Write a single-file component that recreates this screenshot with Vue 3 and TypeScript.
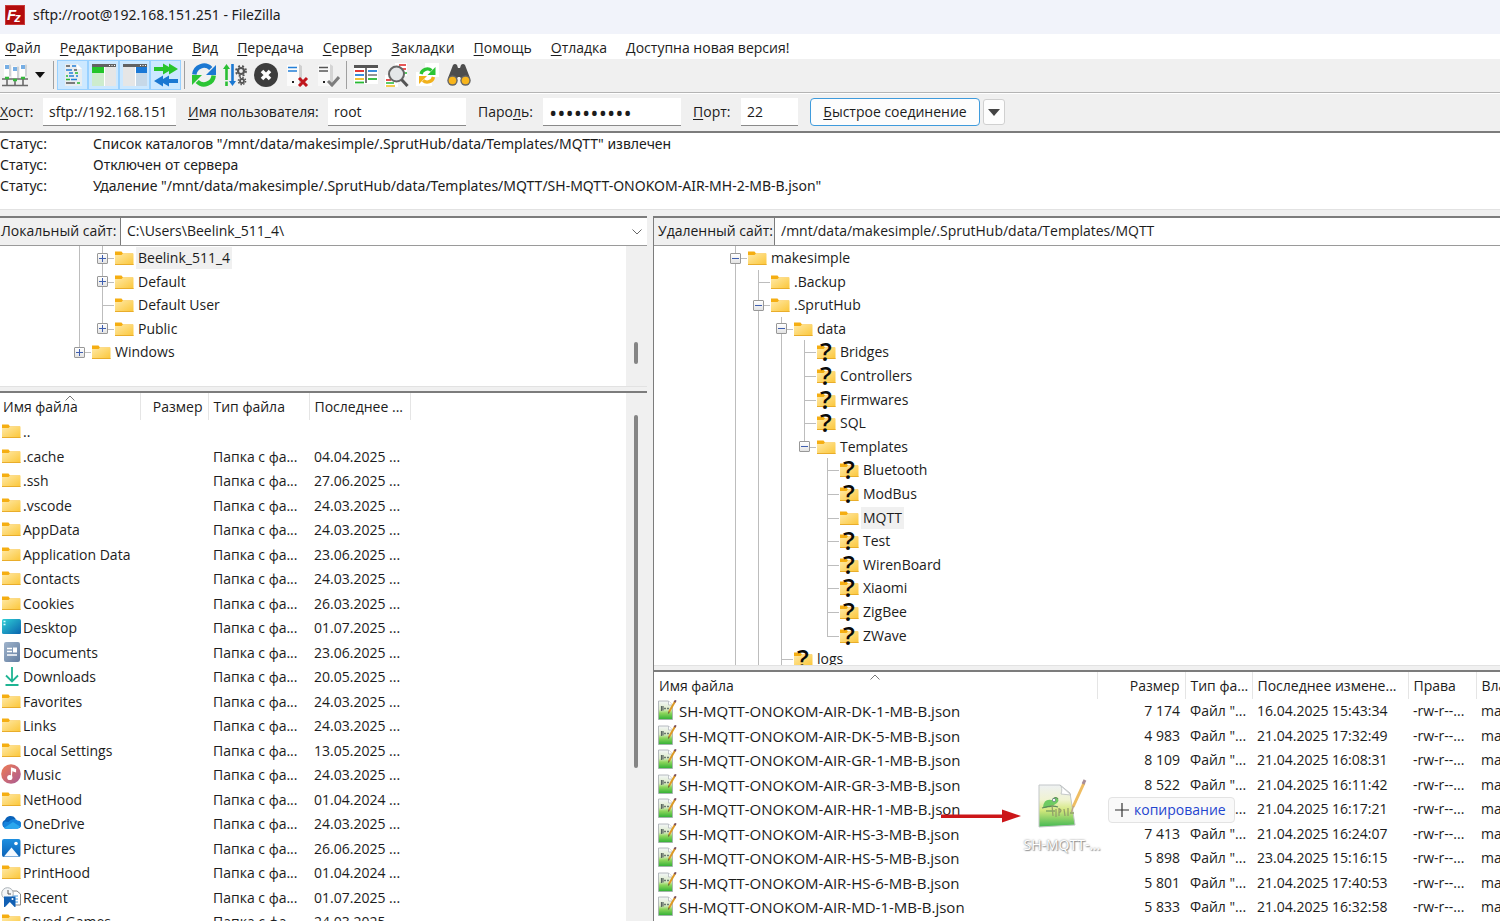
<script setup lang="ts">
import { ref } from 'vue'

type Guide = 'blank' | 'line' | 'tee' | 'elbow' | 'plus' | 'plus-end' | 'minus' | 'minus-top'

interface TreeNode {
  name: string
  icon: 'folder' | 'unknown'
  guides: Guide[]
  selected?: boolean
}

interface LocalFile {
  name: string
  icon: string
  date: string
}

interface RemoteFile {
  name: string
  size: string
  date: string
}

const menu = [
  { key: 'Ф', rest: 'айл' },
  { key: 'Р', rest: 'едактирование' },
  { key: 'В', rest: 'ид' },
  { key: 'П', rest: 'ередача' },
  { key: 'С', rest: 'ервер' },
  { key: 'З', rest: 'акладки' },
  { key: 'П', rest: 'омощь' },
  { key: 'О', rest: 'тладка' },
  { key: 'Д', rest: 'оступна новая версия!' },
]

const toggles = [
  { icon: 'log', label: 'Журнал сообщений' },
  { icon: 'local', label: 'Локальное дерево' },
  { icon: 'remote', label: 'Удаленное дерево' },
  { icon: 'queue', label: 'Очередь передачи' },
]

const actions = [
  { icon: 'refresh', label: 'Обновить' },
  { icon: 'process', label: 'Обработать очередь' },
  { icon: 'cancel', label: 'Отменить' },
  { icon: 'disconnect', label: 'Отключиться' },
  { icon: 'reconnect', label: 'Переподключиться' },
]

const tools = [
  { icon: 'filter', label: 'Фильтры' },
  { icon: 'compare', label: 'Сравнение каталогов' },
  { icon: 'sync', label: 'Синхронный просмотр' },
  { icon: 'find', label: 'Поиск файлов' },
]

const log = [
  'Список каталогов "/mnt/data/makesimple/.SprutHub/data/Templates/MQTT" извлечен',
  'Отключен от сервера',
  'Удаление "/mnt/data/makesimple/.SprutHub/data/Templates/MQTT/SH-MQTT-ONOKOM-AIR-MH-2-MB-B.json"',
]

const localTree: TreeNode[] = [
  { name: 'Beelink_511_4', icon: 'folder', guides: ['line', 'plus'], selected: true },
  { name: 'Default', icon: 'folder', guides: ['line', 'plus'] },
  { name: 'Default User', icon: 'folder', guides: ['line', 'tee'] },
  { name: 'Public', icon: 'folder', guides: ['line', 'plus-end'] },
  { name: 'Windows', icon: 'folder', guides: ['plus-end'] },
]

const remoteTree: TreeNode[] = [
  { name: 'makesimple', icon: 'folder', guides: ['minus'] },
  { name: '.Backup', icon: 'folder', guides: ['line', 'tee'] },
  { name: '.SprutHub', icon: 'folder', guides: ['line', 'minus'] },
  { name: 'data', icon: 'folder', guides: ['line', 'line', 'minus'] },
  ...['Bridges', 'Controllers', 'Firmwares', 'SQL'].map(
    (name): TreeNode => ({ name, icon: 'unknown', guides: ['line', 'line', 'line', 'tee'] }),
  ),
  { name: 'Templates', icon: 'folder', guides: ['line', 'line', 'line', 'minus-top'] },
  ...['Bluetooth', 'ModBus', 'MQTT', 'Test', 'WirenBoard', 'Xiaomi', 'ZigBee', 'ZWave'].map(
    (name): TreeNode => ({
      name,
      icon: name === 'MQTT' ? 'folder' : 'unknown',
      guides: ['line', 'line', 'line', 'blank', name === 'ZWave' ? 'elbow' : 'tee'],
      selected: name === 'MQTT',
    }),
  ),
  { name: 'logs', icon: 'unknown', guides: ['line', 'line', 'tee'] },
]

const localFiles: LocalFile[] = [
  { name: '..', icon: 'folder', date: '' },
  { name: '.cache', icon: 'folder', date: '04.04.2025 ...' },
  { name: '.ssh', icon: 'folder', date: '27.06.2025 ...' },
  { name: '.vscode', icon: 'folder', date: '24.03.2025 ...' },
  { name: 'AppData', icon: 'folder', date: '24.03.2025 ...' },
  { name: 'Application Data', icon: 'folder', date: '23.06.2025 ...' },
  { name: 'Contacts', icon: 'folder', date: '24.03.2025 ...' },
  { name: 'Cookies', icon: 'folder', date: '26.03.2025 ...' },
  { name: 'Desktop', icon: 'desktop', date: '01.07.2025 ...' },
  { name: 'Documents', icon: 'documents', date: '23.06.2025 ...' },
  { name: 'Downloads', icon: 'downloads', date: '20.05.2025 ...' },
  { name: 'Favorites', icon: 'folder', date: '24.03.2025 ...' },
  { name: 'Links', icon: 'folder', date: '24.03.2025 ...' },
  { name: 'Local Settings', icon: 'folder', date: '13.05.2025 ...' },
  { name: 'Music', icon: 'music', date: '24.03.2025 ...' },
  { name: 'NetHood', icon: 'folder', date: '01.04.2024 ...' },
  { name: 'OneDrive', icon: 'cloud', date: '24.03.2025 ...' },
  { name: 'Pictures', icon: 'pictures', date: '26.06.2025 ...' },
  { name: 'PrintHood', icon: 'folder', date: '01.04.2024 ...' },
  { name: 'Recent', icon: 'recent', date: '01.07.2025 ...' },
  { name: 'Saved Games', icon: 'folder', date: '24.03.2025 ...' },
]

const remoteFiles: RemoteFile[] = [
  { name: 'SH-MQTT-ONOKOM-AIR-DK-1-MB-B.json', size: '7 174', date: '16.04.2025 15:43:34' },
  { name: 'SH-MQTT-ONOKOM-AIR-DK-5-MB-B.json', size: '4 983', date: '21.04.2025 17:32:49' },
  { name: 'SH-MQTT-ONOKOM-AIR-GR-1-MB-B.json', size: '8 109', date: '21.04.2025 16:08:31' },
  { name: 'SH-MQTT-ONOKOM-AIR-GR-3-MB-B.json', size: '8 522', date: '21.04.2025 16:11:42' },
  { name: 'SH-MQTT-ONOKOM-AIR-HR-1-MB-B.json', size: '', date: '21.04.2025 16:17:21' },
  { name: 'SH-MQTT-ONOKOM-AIR-HS-3-MB-B.json', size: '7 413', date: '21.04.2025 16:24:07' },
  { name: 'SH-MQTT-ONOKOM-AIR-HS-5-MB-B.json', size: '5 898', date: '23.04.2025 15:16:15' },
  { name: 'SH-MQTT-ONOKOM-AIR-HS-6-MB-B.json', size: '5 801', date: '21.04.2025 17:40:53' },
  { name: 'SH-MQTT-ONOKOM-AIR-MD-1-MB-B.json', size: '5 833', date: '21.04.2025 16:32:58' },
]

const host = ref('sftp://192.168.151')
const user = ref('root')
const password = ref('0123456789')
const port = ref('22')

const hasToggle = (g: Guide) => g.startsWith('plus') || g.startsWith('minus')
</script>

<template>
  <div class="app">
    <svg class="sprite" width="0" height="0" aria-hidden="true">
      <defs>
        <linearGradient id="gFolder" x1="0" y1="0" x2="1" y2="1">
          <stop offset="0" stop-color="#ffe9a6" />
          <stop offset="1" stop-color="#fbc638" />
        </linearGradient>
        <linearGradient id="gDesk" x1="0" y1="0" x2="1" y2="1">
          <stop offset="0" stop-color="#2fd0d6" />
          <stop offset="1" stop-color="#0a63ae" />
        </linearGradient>
        <linearGradient id="gDoc" x1="0" y1="0" x2="1" y2="1">
          <stop offset="0" stop-color="#9fb3cb" />
          <stop offset="1" stop-color="#627da0" />
        </linearGradient>
        <linearGradient id="gMusic" x1="0" y1="0" x2="1" y2="1">
          <stop offset="0" stop-color="#ef7c53" />
          <stop offset="1" stop-color="#a95a95" />
        </linearGradient>
        <linearGradient id="gPic" x1="0" y1="0" x2="0" y2="1">
          <stop offset="0" stop-color="#1f8fe0" />
          <stop offset="1" stop-color="#0b63b8" />
        </linearGradient>
        <linearGradient id="gNote" x1="0" y1="0" x2="0" y2="1">
          <stop offset="0" stop-color="#f3f6f8" />
          <stop offset="0.45" stop-color="#dcebc8" />
          <stop offset="0.65" stop-color="#8ed65c" />
          <stop offset="1" stop-color="#2faf35" />
        </linearGradient>
        <linearGradient id="gGhost" x1="0" y1="0" x2="0" y2="1">
          <stop offset="0" stop-color="#eef1f3" />
          <stop offset="0.35" stop-color="#f0f3d2" />
          <stop offset="0.6" stop-color="#d3e87c" />
          <stop offset="1" stop-color="#43b853" />
        </linearGradient>
      </defs>

      <symbol id="i-folder" viewBox="0 0 20 20">
        <path d="M1 3.500h6.500l1.500 2h10v3H1z" fill="#f5ae12" />
        <path d="M1 7h6.500L9 5.500h10.500V17H1z" fill="url(#gFolder)" />
        <path d="M1 16.500h18.500" stroke="#e9ad2b" />
      </symbol>
      <symbol id="i-unknown" viewBox="0 0 20 20" overflow="visible">
        <use href="#i-folder" />
        <text x="10" y="19" text-anchor="middle" font-family="Open Sans, sans-serif" font-weight="600" font-size="26" fill="#0a0a0a">?</text>
      </symbol>
      <symbol id="i-desktop" viewBox="0 0 20 20">
        <rect x="1" y="2" width="19" height="15" rx="1.500" fill="url(#gDesk)" />
        <path d="M2.500 4.500h2M2.500 7.500h2" stroke="#d6fbff" stroke-width="1.400" />
      </symbol>
      <symbol id="i-documents" viewBox="0 0 20 20">
        <rect x="3" y="0" width="16" height="20" rx="2" fill="url(#gDoc)" />
        <path d="M6 6.500h5M6 9.500h5M6 13h10" stroke="#fff" stroke-width="1.400" />
        <rect x="12" y="5.500" width="4" height="5" fill="#fff" />
      </symbol>
      <symbol id="i-downloads" viewBox="0 0 20 20">
        <path d="M11 1v14M5 9.500l6 6 6-6M4.500 19h13" stroke="#1fb493" stroke-width="1.800" fill="none" />
      </symbol>
      <symbol id="i-music" viewBox="0 0 20 20">
        <circle cx="10" cy="10" r="9.800" fill="url(#gMusic)" />
        <path d="M10.500 13.500V4l4 1.500v2.200l-3-1" fill="#fff" stroke="#fff" stroke-width="1.200" />
        <circle cx="8.800" cy="13.500" r="2.600" fill="#fff" />
      </symbol>
      <symbol id="i-cloud" viewBox="0 0 20 20">
        <path d="M5 15.500a4.500 4.500 0 0 1-1-8.500 6 6 0 0 1 10.500-1.500L11 15.500z" fill="#0a62b9" />
        <path d="M7.500 9a6 6 0 0 1 9-1.500 4 4 0 0 1-.5 8.200H5A4 4 0 0 1 4 8.500z" fill="#1583dc" />
        <path d="M3 15l9-6 7 4.500a3.500 3.500 0 0 1-3 2.200H5a5 5 0 0 1-2-.7z" fill="#2aa7ee" />
      </symbol>
      <symbol id="i-pictures" viewBox="0 0 20 20">
        <rect x="1" y="1" width="18.500" height="18" rx="2" fill="url(#gPic)" />
        <path d="M3 18.500l7.500-9 7.500 9z" fill="#f3f9ff" />
        <circle cx="15" cy="5.500" r="1.800" fill="#fff" />
      </symbol>
      <symbol id="i-recent" viewBox="0 0 20 20">
        <path d="M11 4h5l3.500 3v11h-9z" fill="#fff" stroke="#888" />
        <path d="M12 9h5M12 12h5M12 15h5" stroke="#4a9be0" stroke-width="1.200" />
        <circle cx="6.500" cy="6.500" r="5.800" fill="#f4f6f8" stroke="#a9b0b5" />
        <path d="M7 3v4h3" stroke="#555" fill="none" />
        <path d="M3 9.500h11.500V20H3z" fill="#1160b4" />
        <path d="M4 20l4.800-5 4.800 5z" fill="#fff" />
        <circle cx="11.500" cy="12" r="1" fill="#fff" />
      </symbol>
      <symbol id="i-note" viewBox="0 0 20 20">
        <path d="M1.500 1h10l4 4v14.500h-14z" fill="url(#gNote)" stroke="#a6abb0" stroke-width="0.800" />
        <path d="M11.500 1v4h4" fill="#fff" stroke="#b4b9be" stroke-width="0.800" />
        <path d="M4.500 6v5M6 6v4.500" stroke="#59655f" stroke-width="1.200" />
        <path d="M7 8.500h5" stroke="#6c7a70" stroke-width="1.600" stroke-dasharray="2 1" />
        <path d="M18 1.500L12 12" stroke="#dd9a26" stroke-width="2" />
        <path d="M18.800 0.300l-1.300 2" stroke="#7c5058" stroke-width="2" />
        <path d="M12.200 11.500l-.8 2" stroke="#6b5a3c" stroke-width="1.100" />
      </symbol>

      <symbol id="i-log" viewBox="0 0 24 24">
        <path d="M4 1h12l5 5v17H4z" fill="#e9edf0" />
        <path d="M16 1v5h5z" fill="#fff" />
        <g stroke-width="1.700">
          <path d="M5 3h4M13 7h3M5 20h9" stroke="#555" />
          <path d="M11 3h4M8 13h5M15 13h2" stroke="#2480d8" />
          <path d="M5 7h6M8 10h4M10 16.500h6" stroke="#2480d8" />
          <path d="M14 10h3M5 13h2M5 16.500h4M16 20h3" stroke="#27b834" />
        </g>
      </symbol>
      <symbol id="i-local" viewBox="0 0 24 24">
        <rect x="0" y="1" width="24" height="22" fill="#e6e6e6" />
        <rect x="0" y="1" width="24" height="3" fill="#626262" />
        <path d="M17 2.500h1M19.500 2.500h1M22 2.500h1" stroke="#fff" />
        <rect x="0" y="4" width="12" height="6" fill="#22c52a" />
        <rect x="0" y="10" width="12" height="13" fill="#cdeccd" />
        <path d="M12.500 4v19" stroke="#fff" />
      </symbol>
      <symbol id="i-remote" viewBox="0 0 24 24">
        <rect x="0" y="1" width="24" height="22" fill="#e6e6e6" />
        <rect x="0" y="1" width="24" height="3" fill="#626262" />
        <path d="M17 2.500h1M19.500 2.500h1M22 2.500h1" stroke="#fff" />
        <rect x="13" y="4" width="11" height="6" fill="#1a78d6" />
        <rect x="13" y="10" width="11" height="13" fill="#c6d8e8" />
        <path d="M12.500 4v19" stroke="#fff" />
      </symbol>
      <symbol id="i-queue" viewBox="0 0 24 24">
        <path d="M0 4h9V0.500L15 4V0.500L24 6l-9 5.500V8l-6 3.500V8H0z" fill="#27c52c" />
        <path d="M24 16h-9v-3.500L9 16v-3.500L0 18l9 5.500V20l6 3.500V20h9z" fill="#1b78d2" />
      </symbol>
      <symbol id="i-refresh" viewBox="0 0 24 24">
        <path d="M2.300 11.500a9.700 9.700 0 0 1 16.500-6" fill="none" stroke="#1b78d2" stroke-width="4.500" />
        <path d="M24 2v10H14z" fill="#1b78d2" />
        <path d="M21.700 12.500a9.700 9.700 0 0 1-16.500 6" fill="none" stroke="#2bc534" stroke-width="4.500" />
        <path d="M0 22V12h10z" fill="#2bc534" />
      </symbol>
      <symbol id="i-process" viewBox="0 0 24 24">
        <path d="M3.500 4v19" stroke="#2bbf34" stroke-width="2.600" stroke-dasharray="13 1.500" />
        <path d="M0 6l3.500-5L7 6z" fill="#2bbf34" />
        <path d="M9.500 1v19" stroke="#1b78d2" stroke-width="2.600" />
        <path d="M6 18l3.500 5L13 18z" fill="#1b78d2" />
        <g fill="none" stroke="#555">
          <circle cx="18" cy="8" r="3" stroke-width="2.200" />
          <circle cx="18" cy="8" r="5" stroke-width="1.800" stroke-dasharray="2 2" />
          <circle cx="19" cy="18" r="2" stroke-width="1.800" />
          <circle cx="19" cy="18" r="3.600" stroke-width="1.400" stroke-dasharray="1.500 1.300" />
        </g>
      </symbol>
      <symbol id="i-cancel" viewBox="0 0 24 24">
        <circle cx="12" cy="12" r="12" fill="#3d3d3d" />
        <path d="M8 8l8 8M16 8l-8 8" stroke="#fff" stroke-width="3.600" />
      </symbol>
      <symbol id="i-disconnect" viewBox="0 0 24 24">
        <path d="M2 2l12-1 3 2v20H2z" fill="#fbfbfb" />
        <path d="M14 1l3 2v20h-3z" fill="#d0d0d0" />
        <path d="M3 4.500h9M3 8h9" stroke="#2480d8" stroke-width="1.700" />
        <path d="M7 19h2" stroke="#222" stroke-width="2" />
        <path d="M14 15l8 8M22 15l-8 8" stroke="#c0151c" stroke-width="3" />
      </symbol>
      <symbol id="i-reconnect" viewBox="0 0 24 24">
        <path d="M2 2l12-1 3 2v20H2z" fill="#f8f8f8" />
        <path d="M14 1l3 2v20h-3z" fill="#d4d4d4" />
        <path d="M3 4.500h9M3 8h9" stroke="#555" stroke-width="1.700" />
        <path d="M7 19h2" stroke="#222" stroke-width="2" />
        <path d="M12 18l4 4 7-8" fill="none" stroke="#7d7d7d" stroke-width="3" />
      </symbol>
      <symbol id="i-filter" viewBox="0 0 24 24">
        <path d="M0 2h24v19H0z" fill="#fff" />
        <path d="M0 3.500h24" stroke="#555" stroke-width="3" />
        <path d="M12 3v17" stroke="#555" stroke-width="1.600" />
        <g stroke-width="1.800">
          <path d="M1 8h9" stroke="#e02222" />
          <path d="M14 8h9" stroke="#2480d8" />
          <path d="M1 12h9" stroke="#2480d8" />
          <path d="M14 12h9" stroke="#888" />
          <path d="M1 16h9" stroke="#f0bd22" />
          <path d="M14 16h9" stroke="#27b834" />
          <path d="M1 19.500h9" stroke="#27b834" />
        </g>
      </symbol>
      <symbol id="i-compare" viewBox="0 0 24 24">
        <path d="M10 0h12v13H10zM0 12h13v12H0z" fill="#fff" />
        <path d="M14 2h7M17 6h4" stroke="#e02222" stroke-width="1.600" />
        <path d="M1 17h5" stroke="#e02222" stroke-width="1.600" />
        <path d="M1 20h8M18 10h4" stroke="#27b834" stroke-width="1.600" />
        <path d="M1 23h9" stroke="#f0bd22" stroke-width="1.600" />
        <circle cx="11.500" cy="11" r="7.500" fill="#e3e6e8" fill-opacity="0.950" stroke="#666" stroke-width="2" />
        <path d="M16.500 16.500l6 6.500" stroke="#555" stroke-width="3" />
      </symbol>
      <symbol id="i-sync" viewBox="0 0 24 24">
        <path d="M9 0h14v14H9zM0 9h16v14H0z" fill="#fff" />
        <path d="M5 11a6.500 6.500 0 0 1 10.500-3.500" fill="none" stroke="#2bc534" stroke-width="3.300" />
        <path d="M19.500 4v8h-8z" fill="#2bc534" />
        <path d="M17.500 14a6.500 6.500 0 0 1-10.500 3.500" fill="none" stroke="#f1b11b" stroke-width="3.300" />
        <path d="M3 21v-8h8z" fill="#f1b11b" />
      </symbol>
      <symbol id="i-find" viewBox="0 0 24 24">
        <path d="M6 2q2-2 4 0l1 3h2l1-3q2-2 4 0l5 13-6 4-4-5h-2l-4 5-6-4z" fill="#4d4d4d" />
        <circle cx="5.500" cy="17.500" r="5.200" fill="#666" />
        <circle cx="18.500" cy="17.500" r="5.200" fill="#666" />
        <circle cx="5.500" cy="17.500" r="3.800" fill="#f8b51c" />
        <circle cx="18.500" cy="17.500" r="3.800" fill="#f8b51c" />
      </symbol>
      <symbol id="i-site" viewBox="0 0 26 24">
        <path d="M2 1.500h7v12H2zM10 3.500h7v12h-7zM18 1.500h7v12h-7z" fill="#fff" />
        <path d="M7 1.500h2v12H7zM15 3.500h2v12h-2zM23 1.500h2v12h-2z" fill="#cfd3d6" />
        <path d="M3 3h4M3 5h4M11 5h4M11 7h4M19 3h4M19 5h4" stroke="#4a94dc" stroke-width="1.700" />
        <path d="M0 16h26M0 22.500h26M5 16v6M13 18v4M21 16v6" stroke="#6a6a6a" stroke-width="1.600" fill="none" />
        <path d="M3 15h4M11 17h4M19 15h4" stroke="#35b83c" stroke-width="2.400" />
      </symbol>
    </svg>

    <header class="title">
      <svg class="logo" viewBox="0 0 20 20" aria-hidden="true">
        <rect width="20" height="20" fill="#b30c0c" />
        <rect x="0.500" y="0.500" width="19" height="19" fill="none" stroke="#d66" stroke-dasharray="1 1" />
        <text x="2" y="15" font-family="Liberation Sans, sans-serif" font-size="15" font-weight="700" font-style="italic" fill="#fff">F<tspan dx="-2" dy="2" font-size="13">z</tspan></text>
      </svg>
      <span>sftp://root@192.168.151.251 - FileZilla</span>
    </header>

    <nav class="menu">
      <button v-for="m in menu" :key="m.key + m.rest" type="button"><u>{{ m.key }}</u>{{ m.rest }}</button>
    </nav>

    <div class="toolbar">
      <button type="button" class="site" aria-label="Менеджер сайтов">
        <svg class="ico-site"><use href="#i-site" /></svg>
      </button>
      <button type="button" class="drop" aria-label="Список сайтов">
        <svg viewBox="0 0 10 6" width="10" height="6"><path d="M0 0h10L5 6z" fill="#111" /></svg>
      </button>
      <i class="sep"></i>
      <button v-for="t in toggles" :key="t.icon" type="button" class="tool on" :aria-label="t.label" aria-pressed="true">
        <svg class="ico"><use :href="'#i-' + t.icon" /></svg>
      </button>
      <i class="sep"></i>
      <button v-for="t in actions" :key="t.icon" type="button" class="tool" :aria-label="t.label">
        <svg class="ico"><use :href="'#i-' + t.icon" /></svg>
      </button>
      <i class="sep"></i>
      <button v-for="t in tools" :key="t.icon" type="button" class="tool" :aria-label="t.label">
        <svg class="ico"><use :href="'#i-' + t.icon" /></svg>
      </button>
    </div>

    <form class="quick" @submit.prevent>
      <div class="field host">
        <label for="host"><u>Х</u>ост:</label>
        <input id="host" v-model="host" type="text" />
      </div>
      <div class="field user">
        <label for="user"><u>И</u>мя пользователя:</label>
        <input id="user" v-model="user" type="text" />
      </div>
      <div class="field pass">
        <label for="pass">Паро<u>л</u>ь:</label>
        <input id="pass" v-model="password" type="password" />
      </div>
      <div class="field port">
        <label for="port"><u>П</u>орт:</label>
        <input id="port" v-model="port" type="text" />
      </div>
      <button type="submit" class="connect"><u>Б</u>ыстрое соединение</button>
      <button type="button" class="history" aria-label="Недавние соединения">
        <svg viewBox="0 0 12 7" width="12" height="7"><path d="M0 0h12L6 7z" fill="#444" /></svg>
      </button>
    </form>

    <section class="log">
      <p v-for="line in log" :key="line"><span class="kind">Статус:</span><span>{{ line }}</span></p>
    </section>

    <main class="panes">
      <section class="pane local">
        <div class="address">
          <label for="local-site">Локальный сайт:</label>
          <div class="combo">
            <select id="local-site"><option>C:\Users\Beelink_511_4\</option></select>
            <svg class="chev" viewBox="0 0 10 6" width="10" height="6"><path d="M0.500 0.500l4.500 4.500 4.500-4.500" fill="none" stroke="#666" /></svg>
          </div>
        </div>
        <div class="tree-box">
          <ul class="tree">
            <li v-for="n in localTree" :key="n.name">
              <span v-for="(g, i) in n.guides" :key="i" class="guide" :class="g">
                <button v-if="hasToggle(g)" type="button" class="box" :aria-label="'Развернуть ' + n.name"></button>
              </span>
              <svg class="file-ico"><use :href="'#i-' + n.icon" /></svg>
              <span class="label" :class="{ selected: n.selected }">{{ n.name }}</span>
            </li>
          </ul>
          <div class="scroll"><i class="thumb"></i></div>
        </div>
        <div class="list-box">
          <table class="list">
            <colgroup><col class="l-name" /><col class="l-size" /><col class="l-type" /><col class="l-date" /><col /></colgroup>
            <thead>
              <tr>
                <th>Имя файла<svg class="sort" viewBox="0 0 10 6"><path d="M0.500 5.500l4.500-4.500 4.500 4.500" fill="none" stroke="#777" /></svg></th>
                <th class="num">Размер</th>
                <th>Тип файла</th>
                <th>Последнее ...</th>
                <th class="rest"></th>
              </tr>
            </thead>
            <tbody>
              <tr v-for="f in localFiles" :key="f.name">
                <td><div class="name"><svg class="file-ico"><use :href="'#i-' + f.icon" /></svg><span>{{ f.name }}</span></div></td>
                <td></td>
                <td>{{ f.date ? 'Папка с фа...' : '' }}</td>
                <td>{{ f.date }}</td>
                <td></td>
              </tr>
            </tbody>
          </table>
          <div class="scroll"><i class="thumb"></i></div>
        </div>
      </section>

      <section class="pane remote">
        <div class="address">
          <label for="remote-site">Удаленный сайт:</label>
          <div class="combo">
            <select id="remote-site"><option>/mnt/data/makesimple/.SprutHub/data/Templates/MQTT</option></select>
          </div>
        </div>
        <div class="tree-box">
          <ul class="tree">
            <li v-for="n in remoteTree" :key="n.name">
              <span v-for="(g, i) in n.guides" :key="i" class="guide" :class="g">
                <button v-if="hasToggle(g)" type="button" class="box" :aria-label="'Свернуть ' + n.name"></button>
              </span>
              <svg class="file-ico"><use :href="'#i-' + n.icon" /></svg>
              <span class="label" :class="{ selected: n.selected }">{{ n.name }}</span>
            </li>
          </ul>
        </div>
        <div class="list-box">
          <table class="list">
            <colgroup><col /><col class="r-size" /><col class="r-type" /><col class="r-date" /><col class="r-mode" /><col class="r-owner" /></colgroup>
            <thead>
              <tr>
                <th>Имя файла<svg class="sort" viewBox="0 0 10 6"><path d="M0.500 5.500l4.500-4.500 4.500 4.500" fill="none" stroke="#777" /></svg></th>
                <th class="num">Размер</th>
                <th>Тип фа...</th>
                <th>Последнее измене...</th>
                <th>Права</th>
                <th class="rest">Вла</th>
              </tr>
            </thead>
            <tbody>
              <tr v-for="f in remoteFiles" :key="f.name">
                <td><div class="name"><svg class="file-ico"><use href="#i-note" /></svg><span>{{ f.name }}</span></div></td>
                <td class="num">{{ f.size }}</td>
                <td>Файл "...</td>
                <td>{{ f.date }}</td>
                <td>-rw-r--...</td>
                <td>mak</td>
              </tr>
            </tbody>
          </table>
        </div>
      </section>
    </main>

    <svg class="arrow" viewBox="0 0 80 14" width="80" height="14" aria-hidden="true">
      <path d="M0 5.500h61V0.500L80 7l-19 6.500V9H0z" fill="#cc1619" />
    </svg>
    <div class="ghost">
      <svg viewBox="0 0 50 52" width="50" height="52" aria-hidden="true">
        <path d="M2 6h21l10 8 5 32L2 48z" fill="url(#gGhost)" stroke="#c3c7c8" />
        <path d="M23 6q3 3 1 9l10 1z" fill="#fff" stroke="#b9bdbe" stroke-width="0.800" />
        <path d="M6 28q1-9 9-7 2-4 5-2 3 2 0 5l-3 2q-2 3-6 2-3 2-5 0z" fill="#6fcb62" />
        <path d="M5 29q10-3 16-1M9 32h9M16 20q3-3 5 0" fill="none" stroke="#5d8a5a" stroke-width="1.200" />
        <circle cx="17" cy="21" r="1.600" fill="#fff" stroke="#567" stroke-width="0.600" />
        <path d="M15 26l1 11M19 30v8M22 29v8M22 30q4 1 0 4M27 30l1 7M31 29v8M33 34h4" fill="none" stroke="#93a06a" stroke-width="1.300" />
        <path d="M47 4L36 28" stroke="#efbd62" stroke-width="3" />
        <path d="M48 1l-2 4" stroke="#a88e98" stroke-width="3" />
        <path d="M36.500 27l-2 6" stroke="#b9a386" stroke-width="1.500" />
      </svg>
      <span>SH-MQTT-...</span>
    </div>
    <div class="tip">
      <svg viewBox="0 0 14 14" width="14" height="14" aria-hidden="true"><path d="M7 0v14M0 7h14" stroke="#333" stroke-width="1.200" /></svg>
      <span>копирование</span>
    </div>
  </div>
</template>

<style>
html,
body {
  margin: 0;
  overflow: hidden;
}
</style>

<style scoped>
.app {
  position: relative;
  display: flex;
  flex-direction: column;
  height: 100vh;
  overflow: hidden;
  background: #f0f0f0;
  color: #1c1c1c;
  font-family: 'Open Sans', 'Noto Sans', sans-serif;
  font-size: 14px;
  line-height: 20px;
  white-space: nowrap;
}
.app *,
.app *::before,
.app *::after {
  box-sizing: border-box;
}
button,
input,
select {
  margin: 0;
  padding: 0;
  border: 0;
  background: none;
  color: inherit;
  font: inherit;
}
u {
  text-underline-offset: 2px;
}
.sprite {
  position: absolute;
}
svg {
  flex: none;
  display: block;
}

.title {
  display: flex;
  align-items: center;
  gap: 8px;
  height: 34px;
  padding: 0 5px 4px;
  background: #f1f3fa;
  font-family: 'Noto Sans', 'Open Sans', sans-serif;
}
.logo {
  width: 20px;
  height: 20px;
}
.menu {
  display: flex;
  align-items: center;
  gap: 19px;
  height: 25px;
  padding: 2px 5px 0;
  background: #fff;
}

.toolbar {
  display: flex;
  align-items: center;
  height: 34px;
  padding-bottom: 2px;
  border-bottom: 1px solid #b4b4b4;
}
.toolbar button {
  display: flex;
  align-items: center;
  justify-content: center;
  height: 30px;
}
.site {
  width: 29px;
}
.drop {
  width: 21px;
}
.tool {
  width: 31px;
}
.tool.on {
  background: #cce8ff;
  border: 1px solid #99d1ff;
}
.ico {
  width: 24px;
  height: 24px;
}
.ico-site {
  width: 26px;
  height: 24px;
}
.sep {
  width: 1px;
  height: 28px;
  margin: 0 3px;
  background: #a0a0a0;
}

.quick {
  display: flex;
  align-items: center;
  gap: 12px;
  height: 40px;
  padding-bottom: 1px;
  border-top: 1px solid #fff;
  border-bottom: 2px solid #7c7c7c;
}
.field {
  display: flex;
  align-items: center;
  gap: 8px;
}
.field input {
  height: 28px;
  padding: 0 6px;
  background: #fff;
  border-bottom: 1px solid #8a8a8a;
  outline: 0;
}
.host label {
  width: 35px;
}
.host input {
  width: 133px;
  padding-right: 0;
}
.user label {
  width: 132px;
}
.user input,
.pass input {
  width: 138px;
}
.field input[type='password'] {
  font-size: 22px;
}
.pass label {
  width: 57px;
}
.port label {
  width: 40px;
}
.port input {
  width: 57px;
}
.connect {
  width: 170px;
  height: 28px;
  border: 1px solid #3f9bdc;
  border-radius: 4px;
  background: #fdfdfd;
  text-align: center;
}
.history {
  display: flex;
  align-items: center;
  justify-content: center;
  width: 22px;
  height: 26px;
  margin-left: -9px;
  border: 1px solid #d0d0d0;
  border-radius: 3px;
  background: #fdfdfd;
}

.log {
  height: 77px;
  background: #fff;
  border-bottom: 1px solid #e2e2e2;
  font-family: 'Noto Sans', 'Open Sans', sans-serif;
}
.log p {
  display: flex;
  margin: 0;
  line-height: 21px;
}
.kind {
  width: 93px;
}

.panes {
  flex: 1;
  display: grid;
  grid-template-columns: 648fr 852fr;
  min-height: 0;
  padding-top: 6px;
}
.pane {
  display: flex;
  flex-direction: column;
  min-width: 0;
  min-height: 0;
}
.local {
  margin-right: 1px;
}
.remote {
  margin-left: 5px;
  border-left: 1px solid #7c7c7c;
}
.address {
  display: flex;
  height: 30px;
  border-top: 2px solid #7c7c7c;
  border-bottom: 1px solid #9a9a9a;
}
.address label {
  width: 121px;
  padding: 3px 0 0 1px;
  border-right: 1px solid #7c7c7c;
}
.remote .address label {
  padding-left: 4px;
}
.combo {
  position: relative;
  flex: 1;
  background: #fff;
}
.combo select {
  appearance: none;
  width: 100%;
  height: 26px;
  padding: 0 6px;
  outline: 0;
}
.chev {
  position: absolute;
  top: 11px;
  right: 5px;
}

.tree-box {
  display: flex;
  overflow: hidden;
  background: #fff;
  border-bottom: 1px solid #e2e2e2;
}
.local .tree-box {
  height: 141px;
}
.remote .tree-box {
  height: 420px;
}
.tree {
  flex: 1;
  margin: 0;
  padding: 0 0 0 68px;
  list-style: none;
}
.remote .tree {
  padding-left: 70px;
}
.tree li {
  display: flex;
  align-items: center;
  height: 24px;
}
.tree li:nth-child(5n + 2),
.tree li:nth-child(5n + 4) {
  height: 23px;
}
.guide {
  display: flex;
  align-items: center;
  justify-content: center;
  align-self: stretch;
  width: 23px;
  --v: linear-gradient(#bdbdbd, #bdbdbd) 11px 0;
  --h: linear-gradient(#bdbdbd, #bdbdbd) 11px 12px / 12px 1px no-repeat;
}
.line {
  background: var(--v) / 1px 100% no-repeat;
}
.tee,
.plus,
.minus {
  background: var(--v) / 1px 100% no-repeat, var(--h);
}
.minus-top,
.elbow,
.plus-end {
  background: var(--v) / 1px 12px no-repeat, var(--h);
}
.box {
  width: 11px;
  height: 11px;
  border: 1px solid #989898;
  border-radius: 1px;
  background: linear-gradient(#3f5fb0, #3f5fb0) center / 7px 1px no-repeat, linear-gradient(#fff, #e3e3e3);
}
.plus .box,
.plus-end .box {
  background: linear-gradient(#3f5fb0, #3f5fb0) center / 7px 1px no-repeat,
    linear-gradient(#3f5fb0, #3f5fb0) center / 1px 7px no-repeat, linear-gradient(#fff, #e3e3e3);
}
.file-ico {
  width: 20px;
  height: 20px;
  overflow: visible;
}
.tree .label {
  margin-left: 2px;
  padding: 1px 2px;
}
.tree .label.selected {
  background: #f0f0f0;
}

.scroll {
  flex: none;
  width: 21px;
  padding-left: 8px;
  background: #f0f0f0;
}
.thumb {
  display: block;
  width: 4px;
  border-radius: 2px;
  background: #858585;
}
.local .tree-box .thumb {
  height: 22px;
  margin-top: 96px;
}
.local .list-box .thumb {
  height: 353px;
  margin-top: 22px;
}

.list-box {
  flex: 1;
  display: flex;
  align-items: stretch;
  min-height: 0;
  margin-top: 4px;
  overflow: hidden;
  background: #fff;
  border-top: 2px solid #7c7c7c;
}
.list {
  flex: 1;
  align-self: flex-start;
  width: 100%;
  min-width: 0;
  table-layout: fixed;
  border-collapse: collapse;
}
.l-name {
  width: 140px;
}
.l-size {
  width: 68px;
}
.l-type,
.l-date {
  width: 101px;
}
.r-size {
  width: 88px;
}
.r-type {
  width: 67px;
}
.r-date {
  width: 156px;
}
.r-mode {
  width: 68px;
}
.r-owner {
  width: 24px;
}
.list tr {
  height: 24px;
}
.list tbody tr:nth-child(even) {
  height: 25px;
}
.list thead tr {
  height: 27px;
}
.list th,
.list td {
  padding: 0 0 0 5px;
  overflow: hidden;
  text-align: left;
  font-weight: 400;
}
.list th {
  position: relative;
  border-right: 1px solid #e5e5e5;
}
.list th:first-child {
  padding-left: 3px;
}
.remote .list th:first-child {
  padding-left: 5px;
}
.list th.rest {
  border-right: 0;
}
.list .num {
  padding-right: 5px;
  text-align: right;
}
.list td:first-child {
  padding-left: 1px;
}
.remote .list td:first-child {
  padding-left: 3px;
}
.sort {
  position: absolute;
  top: 2px;
  left: calc(50% - 5px);
  width: 10px;
  height: 6px;
}
.name {
  display: flex;
  align-items: center;
  gap: 2px;
}
.remote .name {
  font-size: 15px;
}
.name .file-ico {
  margin-bottom: 2px;
}

.arrow {
  position: absolute;
  top: 809px;
  left: 941px;
}
.ghost {
  position: absolute;
  top: 779px;
  left: 1021px;
  display: flex;
  flex-direction: column;
  align-items: center;
  width: 82px;
}
.ghost span {
  margin-top: 4px;
  color: #fff;
  text-shadow: 0 0 2px #777, 1px 1px 1px #999;
}
.tip {
  position: absolute;
  top: 797px;
  left: 1108px;
  display: flex;
  align-items: center;
  gap: 5px;
  height: 26px;
  padding: 0 8px 0 6px;
  border: 1px solid #e3e3e3;
  border-radius: 4px;
  background: #f9f9f9;
  color: #1f45cf;
}
</style>
